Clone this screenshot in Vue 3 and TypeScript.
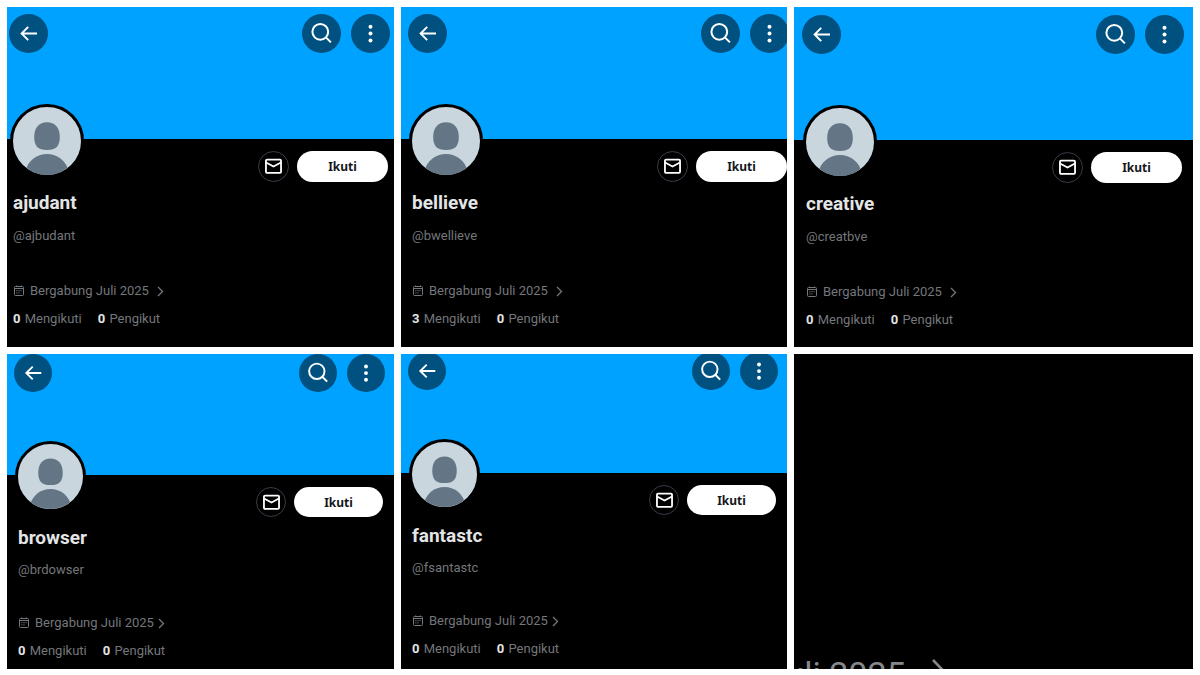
<script setup lang="ts">
interface Profile {
  name: string
  handle: string
  following: number
  followers: number
  variant: string
}

const profiles: Profile[] = [
  { name: 'ajudant', handle: '@ajbudant', following: 0, followers: 0, variant: 'first' },
  { name: 'bellieve', handle: '@bwellieve', following: 3, followers: 0, variant: 'second' },
  { name: 'creative', handle: '@creatbve', following: 0, followers: 0, variant: 'third' },
  { name: 'browser', handle: '@brdowser', following: 0, followers: 0, variant: 'compact' },
  { name: 'fantastc', handle: '@fsantastc', following: 0, followers: 0, variant: 'compact raised' },
]
</script>

<template>
  <main class="gallery">
    <article v-for="p in profiles" :key="p.name" class="card" :class="p.variant">
      <header class="banner">
        <button type="button" class="round" aria-label="Kembali">
          <svg viewBox="0 0 39 39" fill="none" stroke="#fff" stroke-width="1.9">
            <path d="M28 19.5H12.6M19.2 12.9 12.6 19.5l6.6 6.6" />
          </svg>
        </button>
        <div class="tools">
          <button type="button" class="round" aria-label="Cari">
            <svg viewBox="0 0 39 39" fill="none" stroke="#fff" stroke-width="2">
              <circle cx="18.3" cy="17.8" r="7.9" />
              <path d="m23.9 23.4 5 5" />
            </svg>
          </button>
          <button type="button" class="round" aria-label="Lainnya">
            <svg viewBox="0 0 39 39" fill="#fff">
              <circle cx="19.5" cy="12.8" r="2" />
              <circle cx="19.5" cy="19.6" r="2" />
              <circle cx="19.5" cy="26.4" r="2" />
            </svg>
          </button>
        </div>
      </header>

      <div class="identity">
        <div class="avatar">
          <svg viewBox="0 0 68 68" aria-hidden="true">
            <path fill="#647686" d="M34 15.2c8 0 12.8 5.600 12.800 14.800 0 9-3.600 13-12.800 13s-12.800-4-12.800-13c0-9.200 4.800-14.800 12.800-14.800z" />
            <path fill="#647686" d="M12 65c3-11.500 11.500-18 22-18s19 6.500 22 18v3H12z" />
          </svg>
        </div>
        <div class="actions">
          <button type="button" class="mail" aria-label="Pesan">
            <svg viewBox="0 0 16 16" fill="none" stroke="#fff" stroke-width="1.7">
              <rect x="0.900" y="1.500" width="14.200" height="12.500" rx="1" />
              <path d="m1 4.300 7 3.700 7-3.700" />
            </svg>
          </button>
          <button type="button" class="follow">Ikuti</button>
        </div>
      </div>

      <div class="info">
        <h2 class="name">{{ p.name }}</h2>
        <p class="handle">{{ p.handle }}</p>
        <a href="#" class="joined">
          <svg class="calendar" viewBox="0 0 12 12" fill="none" stroke="currentColor">
            <rect x="1.500" y="1.500" width="9" height="9" rx="1" />
            <path d="M3.500 0.500v1.500M8.500 0.500v1.500M1.500 3.500h9" />
            <path d="M3.300 5.700h1.200M5.400 5.700h1.200M7.500 5.700h1.200M3.300 7.900h1.200M5.400 7.900h1.200" />
          </svg>
          <span>Bergabung Juli 2025</span>
          <svg class="chevron" viewBox="0 0 7 11" fill="none" stroke="currentColor" stroke-width="1.300">
            <path d="m1 1 4.500 4.500L1 10" />
          </svg>
        </a>
        <div class="stats">
          <a href="#"><strong>{{ p.following }}</strong> Mengikuti</a>
          <a href="#"><strong>{{ p.followers }}</strong> Pengikut</a>
        </div>
      </div>
    </article>

    <article class="card closeup">
      <div class="strip">
        <span>Juli 2025</span>
        <svg viewBox="0 0 14 26" fill="none" stroke="currentColor" stroke-width="2.600">
          <path d="m1 1 11.500 12L1 25" />
        </svg>
      </div>
    </article>
  </main>
</template>

<style>
body {
  margin: 0;
  background: #fff;
}
</style>

<style scoped>
.gallery {
  display: grid;
  grid-template-columns: 387fr 386fr 399fr;
  gap: 7px;
  padding: 7px;
  font-family: Roboto, "Liberation Sans", sans-serif;
  font-size: 13px;
  line-height: 20px;
}

.card {
  --banner: 132px;
  --below: 86px;
  --round: 39px;
  --left: 6px;
  --right: 6px;
  --avatar: 68px;
  --rise: 35px;
  --action: 31px;
  --follow: 91px;
  --row: 54px;
  --name-gap: 13px;
  --handle-gap: 35px;
  --chevron-gap: 8px;
  --end: 17px;
  min-width: 0;
  overflow: hidden;
  background: #000;
  color: #74777b;
}

.second {
  --left: 11px;
  --right: 0px;
}

.third {
  --banner: 133px;
  --left: 12px;
  --right: 11px;
}

.compact {
  --banner: 121px;
  --below: 83px;
  --round: 38px;
  --left: 11px;
  --right: 11px;
  --avatar: 65px;
  --rise: 34px;
  --action: 30px;
  --follow: 89px;
  --row: 53px;
  --name-gap: 12px;
  --handle-gap: 33px;
  --chevron-gap: 4px;
  --end: 8px;
}

.raised {
  --banner: 119px;
}

.card button {
  padding: 0;
  border: 0;
  font-family: inherit;
  cursor: pointer;
}

.banner {
  box-sizing: border-box;
  display: flex;
  justify-content: space-between;
  align-items: flex-end;
  height: var(--banner);
  padding-bottom: var(--below);
  background: #00a2ff;
}

.banner > .round {
  margin-left: calc(var(--left) - 4px);
}

.tools {
  display: flex;
  gap: 10px;
  margin-right: calc(var(--right) - 2px);
}

.card .round {
  flex: none;
  width: var(--round);
  height: var(--round);
  border-radius: 50%;
  background: #005180;
}

.round svg {
  display: block;
  width: 100%;
  height: 100%;
}

.identity {
  display: flex;
  justify-content: space-between;
  align-items: flex-start;
  height: var(--row);
  padding-right: var(--right);
  padding-left: calc(var(--left) - 3px);
}

.avatar {
  flex: none;
  width: var(--avatar);
  height: var(--avatar);
  margin-top: calc(0px - var(--rise));
  overflow: hidden;
  border: 3px solid #000;
  border-radius: 50%;
  background: #c9d6de;
}

.avatar svg {
  display: block;
  width: 100%;
  height: 100%;
}

.actions {
  display: flex;
  gap: 8px;
  margin-top: 12px;
}

.card .mail {
  display: grid;
  place-items: center;
  box-sizing: border-box;
  width: var(--action);
  height: var(--action);
  border: 1px solid #3a3d48;
  border-radius: 50%;
  background: transparent;
}

.mail svg {
  width: 17px;
  height: 17px;
}

.card .follow {
  width: var(--follow);
  height: var(--action);
  border-radius: 16px;
  background: #fff;
  color: #14171a;
  font-family: "Noto Sans", sans-serif;
  font-size: 12px;
  font-weight: 700;
}

.info {
  padding: 0 0 var(--end) var(--left);
}

.name {
  margin: 0;
  color: #e4e5e6;
  font-size: 19px;
  font-weight: 700;
  line-height: 20px;
}

.handle {
  margin: var(--name-gap) 0 var(--handle-gap);
}

.joined {
  display: flex;
  align-items: center;
  width: max-content;
  color: inherit;
  text-decoration: none;
}

.calendar {
  width: 12px;
  height: 12px;
  margin-right: 5px;
}

.chevron {
  width: 7px;
  height: 11px;
  margin-left: var(--chevron-gap);
}

.stats {
  display: flex;
  gap: 16px;
  margin-top: 8px;
}

.stats a {
  color: inherit;
  text-decoration: none;
}

.stats strong {
  margin-right: 1px;
  color: #e4e5e6;
  font-weight: 700;
}

.closeup {
  display: flex;
  align-items: flex-end;
  color: #85878b;
}

.strip {
  display: flex;
  justify-content: flex-end;
  width: 38%;
  height: 12px;
  overflow: hidden;
  font-size: 34px;
  line-height: 34px;
  white-space: nowrap;
}

.strip span {
  flex: none;
}

.strip svg {
  flex: none;
  width: 14px;
  height: 26px;
  margin: 2px 0 0 26px;
}
</style>
